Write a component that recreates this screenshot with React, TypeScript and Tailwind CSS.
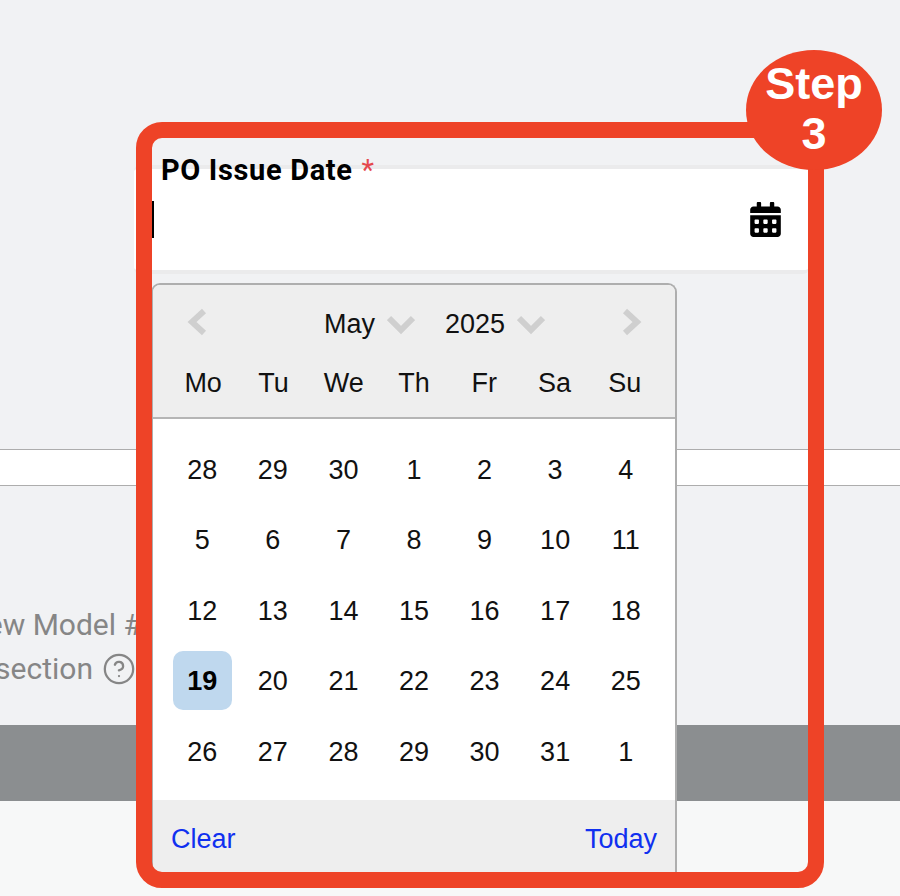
import React from "react";
import { FaCalendarAlt } from "react-icons/fa";
import { HelpCircle } from "lucide-react";

const WEEK_DAYS = ["Mo", "Tu", "We", "Th", "Fr", "Sa", "Su"];
const DAYS = [
  "28", "29", "30", "1", "2", "3", "4",
  "5", "6", "7", "8", "9", "10", "11",
  "12", "13", "14", "15", "16", "17", "18",
  "19", "20", "21", "22", "23", "24", "25",
  "26", "27", "28", "29", "30", "31", "1",
];

const Chevron = ({ points, className }: { points: string; className: string }) => (
  <svg viewBox="0 0 28 28" className={className} fill="none" stroke="#cfcfcf" strokeWidth="6">
    <polyline points={points} />
  </svg>
);

const Calendar = () => (
  <div className="ml-[17px] mt-[9px] w-[526px] overflow-hidden rounded-t-[9px] border-2 border-b-0 border-[#aeaeae] bg-white font-['Liberation_Sans',sans-serif] text-[27px] text-[#111]">
    <div className="h-[134px] border-b-2 border-[#b5b5b5] bg-[#eeeeee] px-[15px]">
      <div className="flex h-[80px] items-center justify-between px-[16px] pb-[2px]">
        <Chevron points="19,3 7,14 19,25" className="mb-[4px] ml-[1px] h-[28px] w-[28px]" />
        <div className="ml-[40px] flex items-center">
          <span>May</span>
          <Chevron points="2,8 14,20 26,8" className="ml-[12px] h-[28px] w-[28px]" />
          <span className="ml-[30px]">2025</span>
          <Chevron points="2,8 14,20 26,8" className="ml-[12px] h-[28px] w-[28px]" />
        </div>
        <Chevron points="9,3 21,14 9,25" className="mb-[4px] h-[28px] w-[28px]" />
      </div>
      <div className="grid grid-cols-7">
        {WEEK_DAYS.map((day) => (
          <div key={day} className="flex h-[36px] items-center justify-center">
            {day}
          </div>
        ))}
      </div>
    </div>
    <div className="grid grid-cols-7 pb-[13px] pl-[14px] pr-[14px] pt-[16px]">
      {DAYS.map((day, i) => (
        <div key={i} className="flex h-[70.4px] items-center justify-center">
          {i === 21 ? (
            <span className="mb-[2px] flex h-[59px] w-[59px] items-center justify-center rounded-[10px] bg-[#bfd8ee] pt-[2px] font-bold text-black">
              {day}
            </span>
          ) : (
            day
          )}
        </div>
      ))}
    </div>
    <div className="flex h-[73px] items-center justify-between bg-[#eeeeee] px-[18px] pt-[6px] text-[#1030f0]">
      <span>Clear</span>
      <span>Today</span>
    </div>
  </div>
);

const App = () => {
  return (
    <div className="relative h-[896px] w-[900px] overflow-hidden bg-[#f1f2f4] font-['Roboto',sans-serif]">
      <div className="h-[449px]" />
      <div className="h-[37px] border-y border-[#adadad] bg-white" />
      <div className="flex h-[239px] w-[142px] flex-col items-end overflow-hidden pt-[117px] text-[30px] leading-[44px] text-[#868686] whitespace-nowrap">
        <div>View Model #</div>
        <div className="flex items-center">
          <span>section</span>
          <HelpCircle className="ml-[9px] mr-[6px] h-[34px] w-[34px]" strokeWidth={1.6} />
        </div>
      </div>
      <div className="h-[76px] bg-[#8b8e90]" />
      <div className="h-[95px] bg-[#f7f8f8]" />

      <div className="absolute left-[134px] top-[165px] w-[675px]">
        <div className="relative h-[109px] rounded-[6px] border-y-[4px] border-[#ebebec] bg-white">
          <div className="absolute left-[27px] top-[-26px] text-[29px] leading-[54px] font-bold tracking-[0.65px] text-black">
            PO Issue Date <span className="ml-[1px] font-normal text-[#e5484d]">*</span>
          </div>
          <div className="absolute left-[18px] top-[32px] h-[37px] w-[2px] bg-black" />
          <FaCalendarAlt className="absolute right-[28px] top-[33px] h-[35px] w-[31px] text-black" />
        </div>
        <Calendar />
      </div>

      <div className="pointer-events-none absolute left-[136px] top-[122px] h-[766px] w-[688px] rounded-[26px] border-[16px] border-[#ee4327]" />
      <div className="absolute left-[746px] top-[50px] flex h-[120px] w-[136px] flex-col items-center justify-center rounded-[50%] bg-[#ee4327] pb-[3px] font-['Liberation_Sans',sans-serif] text-[45px] leading-[50px] font-bold text-white">
        <span>Step</span>
        <span>3</span>
      </div>
    </div>
  );
};

export default App;
